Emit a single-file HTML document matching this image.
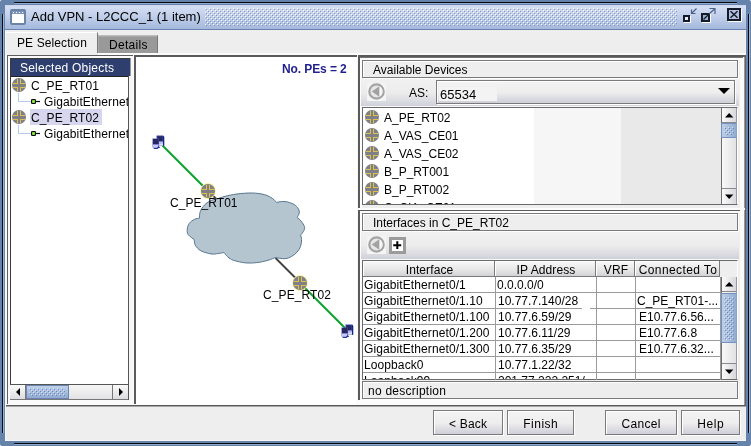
<!DOCTYPE html>
<html><head><meta charset="utf-8"><title>Add VPN - L2CCC_1</title>
<style>
html,body{margin:0;padding:0;}
body{width:751px;height:446px;overflow:hidden;position:relative;background:#fff;font-family:"Liberation Sans",Arial,sans-serif;font-size:12px;color:#000;}
.a{position:absolute;}
.t{position:absolute;white-space:nowrap;line-height:16px;height:16px;will-change:transform;}
.tool{position:absolute;background:linear-gradient(#f1f1f1 0%,#ececec 50%,#dddde3 78%,#d0d0da 100%);}
.box{position:absolute;border:1px solid #7a7a7a;box-shadow:1px 1px 0 #fff, inset 1px 1px 0 #fff;background:#eeeeee;box-sizing:border-box;}
.btn{will-change:transform;position:absolute;box-sizing:border-box;border:1px solid #7a7a7a;box-shadow:inset 1px 1px 0 #fff,1px 1px 0 #fff;background:linear-gradient(#f3f3f3 0%,#eeeeee 52%,#dcdce2 78%,#cfcfd9 100%);text-align:center;line-height:27px;height:25px;top:410px;font-size:12px;}
.sb{position:absolute;box-sizing:border-box;border:1px solid #7a7a7a;background:linear-gradient(90deg,#f6f6f6,#e4e4e6);}
.thumb{position:absolute;box-sizing:border-box;border:1px solid #6c86b4;}
.hd{will-change:transform;position:absolute;top:261px;height:16px;box-sizing:border-box;border-right:1px solid #7a7a7a;border-bottom:1px solid #7a7a7a;background:linear-gradient(#f8f8f8,#e6e6e6 60%,#d2d2d6);text-align:center;text-indent:2px;line-height:19px;box-shadow:inset 1px 1px 0 #fff;}
.vl{position:absolute;top:277px;width:1px;height:103px;background:#9a9a9a;}
.hl{position:absolute;left:363px;width:358px;height:1px;background:#9a9a9a;}
</style></head><body>

<div class="a" style="left:0;top:0;width:751px;height:446px;background:#6683ab;border-radius:2px;"></div>
<div class="a" style="left:2px;top:14px;width:1px;height:419px;background:#060810;"></div>
<div class="a" style="left:3px;top:14px;width:1px;height:419px;background:#9cb3d4;"></div>
<div class="a" style="left:14px;top:2px;width:723px;height:1px;background:#060810;"></div>
<div class="a" style="left:14px;top:3px;width:723px;height:1px;background:#93abcf;"></div>
<div class="a" style="left:748px;top:14px;width:1px;height:419px;background:#060810;"></div>
<div class="a" style="left:749px;top:14px;width:1px;height:419px;background:#9cb3d4;"></div>
<div class="a" style="left:14px;top:443px;width:723px;height:1px;background:#060810;"></div>
<div class="a" style="left:14px;top:444px;width:723px;height:1px;background:#8ea9cd;"></div>
<div class="a" style="left:5px;top:5px;width:741px;height:436px;background:#eeeeee;"></div>
<div class="a" style="left:5px;top:440px;width:741px;height:1px;background:#f7f7f7;"></div>
<div class="a" style="left:5px;top:5px;width:741px;height:24px;background:linear-gradient(#c9d5ee 0%,#d6def3 8%,#d0daf1 16%,#bfcee9 50%,#a5b9dd 100%);"></div>
<div class="a" style="left:5px;top:29px;width:741px;height:1px;background:#6a82b2;"></div>
<svg class="a" style="left:205px;top:8px" width="472" height="18"><defs><pattern id="bp" width="4" height="4" patternUnits="userSpaceOnUse"><rect x="0" y="0" width="1" height="1" fill="#fff"/><rect x="1" y="1" width="1" height="1" fill="#8195c0"/><rect x="2" y="2" width="1" height="1" fill="#fff"/><rect x="3" y="3" width="1" height="1" fill="#8195c0"/></pattern></defs><rect width="472" height="18" fill="url(#bp)"/></svg>
<svg class="a" style="left:10px;top:9px" width="17" height="17"><rect x="1" y="1" width="14" height="14" rx="1" fill="#fff" stroke="#6a84a8" stroke-width="2"/><rect x="2" y="2" width="12" height="3" fill="#7d94b8"/><g fill="#fff"><rect x="3" y="3" width="1" height="1"/><rect x="6" y="3" width="1" height="1"/><rect x="9" y="3" width="1" height="1"/><rect x="12" y="3" width="1" height="1"/></g></svg>
<div class="t" style="left:31px;top:9px;font-size:13px;">Add VPN - L2CCC_1 (1 item)</div>
<svg class="a" style="left:680px;top:6px" width="64" height="20" shape-rendering="crispEdges">
<g fill="none" stroke="#fff" stroke-width="2"><rect x="5" y="11" width="5" height="5"/></g>
<rect x="4" y="10" width="5" height="5" fill="#e8eef8" stroke="#141a28" stroke-width="2"/>
<g shape-rendering="auto" stroke="#141a28" stroke-width="1.3" fill="none"><path d="M16.5 2.5L11.5 7.5M11.5 3.5V7.5H15.5" stroke="#4d6288" stroke-width="1.2"/></g>
<g fill="none" stroke="#fff" stroke-width="2"><rect x="23" y="9" width="7" height="7"/></g>
<rect x="22" y="8" width="7" height="7" fill="#9fb0d0" stroke="#141a28" stroke-width="2"/>
<g shape-rendering="auto" stroke="#141a28" stroke-width="1.3" fill="none"><path d="M23.5 13.5L29 8" stroke="#141a28"/><path d="M29 8L34.5 3M29.5 2.5H35V8" stroke="#4d6288" stroke-width="1.2"/></g>
<g fill="none" stroke="#fff" stroke-width="1"><rect x="48.5" y="3.5" width="13" height="12"/></g>
<rect x="48" y="3" width="12" height="11" fill="#b3c1de" stroke="#141a28" stroke-width="2"/>
<g shape-rendering="auto" stroke="#141a28" stroke-width="1.5" fill="none"><path d="M50.5 5.3L57.5 11.7M57.5 5.3L50.5 11.7"/></g>
</svg>
<div class="a" style="left:5px;top:32px;width:93px;height:21px;background:#eeeeee;border-left:1px solid #fff;border-top:1px solid #fff;border-right:1px solid #787878;box-sizing:border-box;"></div>
<div class="a" style="left:98px;top:35px;width:60px;height:18px;background:#999999;border-left:1px solid #aaaaaa;border-top:1px solid #bcbcbc;border-right:1px solid #787878;box-sizing:border-box;box-shadow:inset 0 1px 0 #a8a8a8;"></div>
<div class="t" style="left:17px;top:35px;letter-spacing:0.1px;">PE Selection</div>
<div class="t" style="left:109px;top:37px;letter-spacing:0.3px;">Details</div>
<div class="a" style="left:98px;top:53px;width:648px;height:2px;background:#fbfbfb;"></div>
<div class="a" style="left:5px;top:30px;width:1px;height:411px;background:#fafafa;"></div>
<div class="a" style="left:6px;top:55px;width:1px;height:350px;background:#fafafa;"></div>
<div class="a" style="left:7px;top:400px;width:738px;height:5px;background:#fbfbfb;"></div>
<div class="a" style="left:740px;top:55px;width:4px;height:350px;background:#fbfbfb;"></div>
<div class="a" style="left:744px;top:55px;width:1px;height:351px;background:#9a9a9a;"></div>
<div class="a" style="left:745px;top:55px;width:1px;height:351px;background:#626262;"></div>
<div class="a" style="left:6px;top:405px;width:740px;height:1px;background:#5a5a5a;"></div><div class="a" style="left:6px;top:406px;width:740px;height:1px;background:#a6a6a6;"></div>
<div class="a" style="left:7px;top:55px;width:126px;height:349px;border-left:1px solid #5e5e5e;border-top:1px solid #5e5e5e;box-sizing:border-box;background:#fafafa;"></div>
<div class="a" style="left:133px;top:55px;width:1px;height:350px;background:#fbfbfb;"></div>
<div class="a" style="left:10px;top:58px;width:120px;height:342px;background:#3a3a3a;"></div>
<div class="a" style="left:130px;top:58px;width:1px;height:20px;background:#9a9a9a;"></div>
<div class="a" style="left:11px;top:59px;width:119px;height:17px;background:#2e3f6f;"></div>
<div class="a" style="left:129px;top:76px;width:4px;height:324px;background:#f5f5f5;"></div>
<div class="a" style="left:11px;top:76px;width:118px;height:1px;background:#222;"></div>
<div class="a" style="left:11px;top:77px;width:117px;height:307px;background:#fff;"></div>
<div class="a" style="left:128px;top:76px;width:1px;height:324px;background:#555;"></div>
<div class="t" style="left:20px;top:60px;color:#fff;letter-spacing:0.22px;">Selected Objects</div>
<div class="a" style="left:30px;top:109px;width:72px;height:16px;background:#d6d6ee;"></div>
<svg class="a" style="left:11px;top:77px" width="16" height="16" viewBox="-1 -1 16 16"><circle cx="7" cy="7" r="7" fill="#7f7f86"/><g fill="#dfc052" shape-rendering="crispEdges"><rect x="5" y="1" width="1" height="5"/><rect x="1" y="5" width="5" height="1"/><rect x="8" y="1" width="1" height="5"/><rect x="8" y="5" width="5" height="1"/><rect x="1" y="9" width="5" height="1"/><rect x="5" y="9" width="1" height="4"/><rect x="8" y="9" width="5" height="1"/><rect x="8" y="9" width="1" height="4"/></g></svg>
<svg class="a" style="left:11px;top:109px" width="16" height="16" viewBox="-1 -1 16 16"><circle cx="7" cy="7" r="7" fill="#7f7f86"/><g fill="#dfc052" shape-rendering="crispEdges"><rect x="5" y="1" width="1" height="5"/><rect x="1" y="5" width="5" height="1"/><rect x="8" y="1" width="1" height="5"/><rect x="8" y="5" width="5" height="1"/><rect x="1" y="9" width="5" height="1"/><rect x="5" y="9" width="1" height="4"/><rect x="8" y="9" width="5" height="1"/><rect x="8" y="9" width="1" height="4"/></g></svg>
<svg class="a" style="left:14px;top:93px" width="30" height="16"><path d="M4.5 0V8.5H17" fill="none" stroke="#b4caee" stroke-width="1"/><rect x="17" y="6" width="5" height="5" rx="1.3" fill="#0a0a0a"/><rect x="18.1" y="7.1" width="2.8" height="2.8" fill="#84f044"/><path d="M22 8.5H26" stroke="#0a0a0a" stroke-width="1.2"/></svg>
<svg class="a" style="left:14px;top:125px" width="30" height="16"><path d="M4.5 0V8.5H17" fill="none" stroke="#b4caee" stroke-width="1"/><rect x="17" y="6" width="5" height="5" rx="1.3" fill="#0a0a0a"/><rect x="18.1" y="7.1" width="2.8" height="2.8" fill="#84f044"/><path d="M22 8.5H26" stroke="#0a0a0a" stroke-width="1.2"/></svg>
<div class="t" style="left:31px;top:78px;letter-spacing:0.1px;">C_PE_RT01</div>
<div class="t" style="left:44px;top:94px;width:84px;overflow:hidden;letter-spacing:0.12px;">GigabitEthernet0/1.10</div>
<div class="t" style="left:31px;top:110px;letter-spacing:0.1px;">C_PE_RT02</div>
<div class="t" style="left:44px;top:126px;width:84px;overflow:hidden;letter-spacing:0.12px;">GigabitEthernet0/1.10</div>
<div class="a" style="left:10px;top:384px;width:118px;height:16px;background:linear-gradient(#f6f6f6,#e2e2e4);border-top:1px solid #555;border-bottom:1px solid #777;box-sizing:border-box;"></div>
<div class="a" style="left:10px;top:385px;width:16px;height:14px;background:linear-gradient(#fafafa,#dcdce0);border-right:1px solid #777;box-sizing:border-box;"></div>
<div class="a" style="left:112px;top:385px;width:16px;height:14px;background:linear-gradient(#fafafa,#dcdce0);border-left:1px solid #777;box-sizing:border-box;"></div>
<svg class="a" style="left:10px;top:385px" width="118" height="14"><path d="M10 3V11L6 7Z M109 3V11L113 7Z" fill="#000"/></svg>
<div class="a" style="left:26px;top:385px;width:43px;height:14px;background:linear-gradient(#c0d1ea,#a4badb 60%,#93abd1);border:1px solid #6c86b4;box-sizing:border-box;"></div>
<svg class="a" style="left:29px;top:388px" width="36" height="8"><rect width="36" height="8" fill="url(#bp2)"/><defs><pattern id="bp2" width="4" height="4" patternUnits="userSpaceOnUse"><rect x="0" y="0" width="1" height="1" fill="#d6e2f4"/><rect x="1" y="1" width="1" height="1" fill="#6c88b8"/><rect x="2" y="2" width="1" height="1" fill="#d6e2f4"/><rect x="3" y="3" width="1" height="1" fill="#6c88b8"/></pattern></defs></svg>
<div class="a" style="left:134px;top:55px;width:223px;height:349px;background:#fff;border-left:2px solid #5a5a5a;border-top:2px solid #5a5a5a;box-sizing:border-box;"></div>
<div class="a" style="left:357px;top:55px;width:1px;height:349px;background:#f8f8f8;"></div>
<div class="t" style="left:282px;top:61px;color:#1f1f8f;font-weight:bold;letter-spacing:-0.1px;">No. PEs = 2</div>
<svg class="a" style="left:137px;top:57px" width="221" height="346" viewBox="137 57 221 346">
<path d="M161 144L206 189" stroke="#12a033" stroke-width="2.1"/>
<path d="M209 192L218 200.5" stroke="#404040" stroke-width="1.8"/>
<path d="M275.5 258L298 280.5" stroke="#404040" stroke-width="1.8"/>
<path d="M300 283L346 329" stroke="#12a033" stroke-width="2.1"/>
<path d="M199.3 218.3C199.5 217.2 199.4 213.7 200.3 211.5C201.2 209.3 202.9 206.8 204.5 205.0C206.1 203.2 208.0 202.0 210.0 201.0C212.0 200.0 215.6 199.3 216.7 199.0C218.1 198.6 221.6 197.1 225.0 196.3C228.4 195.5 232.4 194.6 237.0 194.0C241.6 193.4 247.7 192.9 252.3 193.0C256.9 193.1 261.3 193.8 264.7 194.7C268.1 195.6 270.5 197.2 272.5 198.5C274.5 199.8 275.8 201.8 276.5 202.4C277.9 202.2 282.0 201.2 284.9 201.5C287.8 201.8 291.6 203.1 293.8 204.3C296.0 205.5 297.4 207.3 298.3 208.8C299.2 210.3 299.4 211.8 299.2 213.2C299.0 214.6 297.5 216.7 297.2 217.4C297.9 218.0 299.9 219.6 301.1 221.1C302.3 222.6 304.0 225.1 304.5 226.7C305.0 228.3 304.5 229.2 303.9 230.6C303.2 232.0 301.2 234.4 300.6 235.2C300.8 235.9 301.6 237.8 301.6 239.6C301.6 241.4 301.3 244.2 300.6 246.3C299.9 248.4 298.7 250.2 297.2 251.9C295.7 253.6 293.7 255.3 291.6 256.4C289.6 257.5 287.6 258.5 284.9 258.7C282.2 258.9 276.9 257.7 275.3 257.5C274.1 258.0 271.1 259.4 268.0 260.3C264.9 261.2 260.5 262.2 256.8 262.6C253.1 263.0 249.5 263.3 245.6 262.9C241.7 262.5 236.4 261.3 233.5 260.3C230.6 259.3 229.5 258.3 227.9 257.0C226.3 255.7 224.6 253.2 223.9 252.5C222.9 252.7 220.0 253.4 217.8 253.6C215.7 253.8 213.8 254.4 211.0 253.9C208.2 253.4 203.5 252.2 200.9 250.8C198.3 249.4 196.4 247.1 195.3 245.2C194.2 243.3 194.4 240.5 194.2 239.6C193.2 238.8 189.3 236.3 188.2 234.5C187.0 232.7 187.1 230.8 187.3 229.0C187.5 227.2 188.0 225.1 189.2 223.5C190.4 221.9 192.8 220.2 194.5 219.3C196.2 218.4 198.5 218.5 199.3 218.3Z" fill="#b5c5cf" stroke="#567590" stroke-width="1"/>
</svg>
<svg class="a" style="left:200px;top:183px" width="16" height="16" viewBox="-1 -1 16 16"><circle cx="7" cy="7" r="7.7" fill="#f6ee7c"/><circle cx="7" cy="7" r="7" fill="#7f7f86"/><g fill="#dfc052" shape-rendering="crispEdges"><rect x="5" y="1" width="1" height="5"/><rect x="1" y="5" width="5" height="1"/><rect x="8" y="1" width="1" height="5"/><rect x="8" y="5" width="5" height="1"/><rect x="1" y="9" width="5" height="1"/><rect x="5" y="9" width="1" height="4"/><rect x="8" y="9" width="5" height="1"/><rect x="8" y="9" width="1" height="4"/></g></svg>
<svg class="a" style="left:292px;top:275px" width="16" height="16" viewBox="-1 -1 16 16"><circle cx="7" cy="7" r="7.7" fill="#f6ee7c"/><circle cx="7" cy="7" r="7" fill="#7f7f86"/><g fill="#dfc052" shape-rendering="crispEdges"><rect x="5" y="1" width="1" height="5"/><rect x="1" y="5" width="5" height="1"/><rect x="8" y="1" width="1" height="5"/><rect x="8" y="5" width="5" height="1"/><rect x="1" y="9" width="5" height="1"/><rect x="5" y="9" width="1" height="4"/><rect x="8" y="9" width="5" height="1"/><rect x="8" y="9" width="1" height="4"/></g></svg>
<div class="t" style="left:170px;top:195px;letter-spacing:0.05px;">C_PE_RT01</div>
<div class="t" style="left:262.5px;top:287px;letter-spacing:0.1px;">C_PE_RT02</div>
<svg class="a" style="left:152px;top:135px" width="13" height="15" viewBox="0 0 13 15"><path d="M4.5 0.5H11L12 1.5V10L11 11H5Z" fill="#3a46b8"/><path d="M11 0.5L12.3 2V10.5L11 11Z" fill="#0c2a78"/><rect x="5.2" y="1.3" width="5.3" height="5" fill="#28285c"/><path d="M5 6.5H11V10.5H6.5Z" fill="#b8bcf0"/><path d="M0.5 3.5H6.5L7 4V12L6 14H2L0.5 12Z" fill="#4a52c4"/><rect x="1" y="4" width="5.5" height="5.3" fill="#28285c"/><path d="M1 9.5H6.5V11L5 12.8H1.5L0.3 11.5Z" fill="#c4c8f4"/><path d="M2 13H7.5L8 12L6.5 11.2L5 13.8H2.5Z" fill="#102a80"/><path d="M7 9.5L10.5 8.5L11 10.5H7Z" fill="#e6e8fb"/></svg>
<svg class="a" style="left:341px;top:324px" width="13" height="15" viewBox="0 0 13 15"><path d="M4.5 0.5H11L12 1.5V10L11 11H5Z" fill="#3a46b8"/><path d="M11 0.5L12.3 2V10.5L11 11Z" fill="#0c2a78"/><rect x="5.2" y="1.3" width="5.3" height="5" fill="#28285c"/><path d="M5 6.5H11V10.5H6.5Z" fill="#b8bcf0"/><path d="M0.5 3.5H6.5L7 4V12L6 14H2L0.5 12Z" fill="#4a52c4"/><rect x="1" y="4" width="5.5" height="5.3" fill="#28285c"/><path d="M1 9.5H6.5V11L5 12.8H1.5L0.3 11.5Z" fill="#c4c8f4"/><path d="M2 13H7.5L8 12L6.5 11.2L5 13.8H2.5Z" fill="#102a80"/><path d="M7 9.5L10.5 8.5L11 10.5H7Z" fill="#e6e8fb"/></svg>
<div class="a" style="left:358px;top:55px;width:382px;height:153px;border-left:2px solid #5a5a5a;border-top:2px solid #5a5a5a;box-sizing:border-box;background:#eeeeee;"></div>
<div class="a" style="left:740px;top:55px;width:5px;height:2px;background:#5a5a5a;"></div>
<div class="a" style="left:360px;top:57px;width:383px;height:1px;background:#747474;"></div>
<div class="a" style="left:360px;top:58px;width:2px;height:150px;background:#fcfcfc;"></div>
<div class="a" style="left:360px;top:58px;width:380px;height:2px;background:#fcfcfc;"></div>
<div class="a" style="left:358px;top:208px;width:387px;height:2px;background:#fcfcfc;"></div>
<div class="a" style="left:358px;top:210px;width:382px;height:190px;border-left:2px solid #5a5a5a;border-top:1px solid #5a5a5a;box-sizing:border-box;background:#eeeeee;"></div>
<div class="a" style="left:360px;top:211px;width:2px;height:189px;background:#fcfcfc;"></div>
<div class="a" style="left:360px;top:211px;width:380px;height:2px;background:#fcfcfc;"></div>
<div class="box" style="left:362px;top:60px;width:376px;height:18px;"></div>
<div class="t" style="left:373px;top:62px;">Available Devices</div>
<div class="tool" style="left:361px;top:79px;width:378px;height:27px;"></div>
<div class="a" style="left:367px;top:83px;width:19px;height:18px;background:#f4f4f4;"></div><svg class="a" style="left:368px;top:83px" width="18" height="18" viewBox="0 0 18 18"><circle cx="8.5" cy="8.5" r="7.2" fill="#e6e6e6" stroke="#a4a4a4" stroke-width="2.2"/><path d="M11.2 3V14A6.2 6.2 0 0 0 11.2 3Z" fill="#f6f6f6"/><path d="M11.3 3.2V13.8L3.8 8.5Z" fill="#a2a2a2"/></svg>
<div class="t" style="left:409px;top:85px;">AS:</div>
<div class="a" style="left:436px;top:80px;width:299px;height:24px;box-sizing:border-box;border:1px solid #7a7a7a;box-shadow:inset 1px 1px 0 #fff,1px 1px 0 #fff;background:linear-gradient(#f3f3f3 0%,#eeeeee 52%,#dcdce2 78%,#cfcfd9 100%);"></div>
<div class="a" style="left:439px;top:87px;width:58px;height:14px;background:#f3f3f3;"></div><div class="t" style="left:440px;top:87px;font-size:13px;">65534</div>
<svg class="a" style="left:717px;top:87px" width="14" height="8"><path d="M1 1H13L7 7Z" fill="#000"/></svg>
<div class="a" style="left:362px;top:107px;width:376px;height:98px;box-sizing:border-box;border:1px solid #6a6a6a;border-right-color:#fff;background:linear-gradient(90deg,#fff 0,#fff 171px,#f6f6f6 171px,#f6f6f6 258px,#e9e9e9 258px);overflow:hidden;"></div>
<div class="a" style="left:363px;top:108px;width:358px;height:96px;overflow:hidden;">
<svg class="a" style="left:1px;top:1px" width="16" height="16" viewBox="-1 -1 16 16"><circle cx="7" cy="7" r="7" fill="#7f7f86"/><g fill="#dfc052" shape-rendering="crispEdges"><rect x="5" y="1" width="1" height="5"/><rect x="1" y="5" width="5" height="1"/><rect x="8" y="1" width="1" height="5"/><rect x="8" y="5" width="5" height="1"/><rect x="1" y="9" width="5" height="1"/><rect x="5" y="9" width="1" height="4"/><rect x="8" y="9" width="5" height="1"/><rect x="8" y="9" width="1" height="4"/></g></svg>
<div class="t" style="left:21px;top:2px;">A_PE_RT02</div>
<svg class="a" style="left:1px;top:19px" width="16" height="16" viewBox="-1 -1 16 16"><circle cx="7" cy="7" r="7" fill="#7f7f86"/><g fill="#dfc052" shape-rendering="crispEdges"><rect x="5" y="1" width="1" height="5"/><rect x="1" y="5" width="5" height="1"/><rect x="8" y="1" width="1" height="5"/><rect x="8" y="5" width="5" height="1"/><rect x="1" y="9" width="5" height="1"/><rect x="5" y="9" width="1" height="4"/><rect x="8" y="9" width="5" height="1"/><rect x="8" y="9" width="1" height="4"/></g></svg>
<div class="t" style="left:21px;top:20px;">A_VAS_CE01</div>
<svg class="a" style="left:1px;top:37px" width="16" height="16" viewBox="-1 -1 16 16"><circle cx="7" cy="7" r="7" fill="#7f7f86"/><g fill="#dfc052" shape-rendering="crispEdges"><rect x="5" y="1" width="1" height="5"/><rect x="1" y="5" width="5" height="1"/><rect x="8" y="1" width="1" height="5"/><rect x="8" y="5" width="5" height="1"/><rect x="1" y="9" width="5" height="1"/><rect x="5" y="9" width="1" height="4"/><rect x="8" y="9" width="5" height="1"/><rect x="8" y="9" width="1" height="4"/></g></svg>
<div class="t" style="left:21px;top:38px;">A_VAS_CE02</div>
<svg class="a" style="left:1px;top:55px" width="16" height="16" viewBox="-1 -1 16 16"><circle cx="7" cy="7" r="7" fill="#7f7f86"/><g fill="#dfc052" shape-rendering="crispEdges"><rect x="5" y="1" width="1" height="5"/><rect x="1" y="5" width="5" height="1"/><rect x="8" y="1" width="1" height="5"/><rect x="8" y="5" width="5" height="1"/><rect x="1" y="9" width="5" height="1"/><rect x="5" y="9" width="1" height="4"/><rect x="8" y="9" width="5" height="1"/><rect x="8" y="9" width="1" height="4"/></g></svg>
<div class="t" style="left:21px;top:56px;">B_P_RT001</div>
<svg class="a" style="left:1px;top:73px" width="16" height="16" viewBox="-1 -1 16 16"><circle cx="7" cy="7" r="7" fill="#7f7f86"/><g fill="#dfc052" shape-rendering="crispEdges"><rect x="5" y="1" width="1" height="5"/><rect x="1" y="5" width="5" height="1"/><rect x="8" y="1" width="1" height="5"/><rect x="8" y="5" width="5" height="1"/><rect x="1" y="9" width="5" height="1"/><rect x="5" y="9" width="1" height="4"/><rect x="8" y="9" width="5" height="1"/><rect x="8" y="9" width="1" height="4"/></g></svg>
<div class="t" style="left:21px;top:74px;">B_P_RT002</div>
<svg class="a" style="left:1px;top:91px" width="16" height="16" viewBox="-1 -1 16 16"><circle cx="7" cy="7" r="7" fill="#7f7f86"/><g fill="#dfc052" shape-rendering="crispEdges"><rect x="5" y="1" width="1" height="5"/><rect x="1" y="5" width="5" height="1"/><rect x="8" y="1" width="1" height="5"/><rect x="8" y="5" width="5" height="1"/><rect x="1" y="9" width="5" height="1"/><rect x="5" y="9" width="1" height="4"/><rect x="8" y="9" width="5" height="1"/><rect x="8" y="9" width="1" height="4"/></g></svg>
<div class="t" style="left:21px;top:92px;">C_CIA_CE01</div>
</div>
<div class="a" style="left:721px;top:108px;width:16px;height:96px;background:linear-gradient(90deg,#f8f8f8,#e2e2e4);border-left:1px solid #6e6e6e;border-right:1px solid #9a9a9a;box-sizing:border-box;"></div>
<div class="a" style="left:722px;top:108px;width:14px;height:15px;background:linear-gradient(90deg,#fbfbfb,#d8d8dc);border-bottom:1px solid #8a8a8a;box-sizing:border-box;"></div>
<div class="a" style="left:722px;top:188px;width:14px;height:16px;background:linear-gradient(90deg,#fbfbfb,#d8d8dc);border-top:1px solid #8a8a8a;box-sizing:border-box;"></div>
<svg class="a" style="left:721px;top:108px" width="16" height="96"><path d="M4 9.5H12.4L8.2 5Z M4 86.5H12.4L8.2 91.0Z" fill="#000"/></svg>
<div class="a" style="left:721px;top:123px;width:16px;height:15px;background:linear-gradient(90deg,#bccde8,#a6bcdc 55%,#93abd0);border:1px solid #7390c0;border-right-color:#8aa2cc;box-sizing:border-box;"></div>
<svg class="a" style="left:724px;top:127px" width="10" height="8"><rect width="10" height="8" fill="url(#bp2)"/></svg>
<div class="a" style="left:362px;top:106px;width:376px;height:1px;background:#f8f8f8;"></div><div class="a" style="left:362px;top:259px;width:376px;height:1px;background:#f8f8f8;"></div>
<div class="box" style="left:362px;top:213px;width:376px;height:18px;"></div>
<div class="t" style="left:373px;top:215px;">Interfaces in C_PE_RT02</div>
<div class="tool" style="left:361px;top:232px;width:378px;height:27px;"></div>
<div class="a" style="left:367px;top:236px;width:19px;height:18px;background:#f4f4f4;"></div><svg class="a" style="left:368px;top:236px" width="18" height="18" viewBox="0 0 18 18"><circle cx="8.5" cy="8.5" r="7.2" fill="#e6e6e6" stroke="#a4a4a4" stroke-width="2.2"/><path d="M11.2 3V14A6.2 6.2 0 0 0 11.2 3Z" fill="#f6f6f6"/><path d="M11.3 3.2V13.8L3.8 8.5Z" fill="#a2a2a2"/></svg>
<div class="a" style="left:389px;top:237px;width:17px;height:17px;box-sizing:border-box;border:3px solid #9b9b9b;background:#fff;"></div>
<svg class="a" style="left:389px;top:237px" width="17" height="17"><path d="M8.3 4.3V12.1M4.2 8.3H12.2" stroke="#000" stroke-width="2"/></svg>
<div class="a" style="left:362px;top:260px;width:376px;height:120px;box-sizing:border-box;border:1px solid #6a6a6a;border-right-color:#fff;background:#fff;"></div>
<div class="a" style="left:363px;top:261px;width:374px;height:16px;background:#eeeeee;"></div>
<div class="hd" style="left:363px;width:132px;letter-spacing:0.10px;">Interface</div>
<div class="hd" style="left:495px;width:101px;letter-spacing:0.10px;">IP Address</div>
<div class="hd" style="left:596px;width:39px;letter-spacing:0.10px;">VRF</div>
<div class="hd" style="left:635px;width:85px;letter-spacing:0.40px;">Connected To</div>
<div class="a" style="left:363px;top:277px;width:358px;height:102px;overflow:hidden;">
<div class="t" style="left:1px;top:0px;letter-spacing:0.1px;">GigabitEthernet0/1</div>
<div class="t" style="left:134px;top:0px;">0.0.0.0/0</div>
<div class="t" style="left:1px;top:16px;letter-spacing:0.1px;">GigabitEthernet0/1.10</div>
<div class="t" style="left:135px;top:16px;">10.77.7.140/28</div>
<div class="t" style="left:274px;top:16px;">C_PE_RT01-...</div>
<div class="t" style="left:1px;top:32px;letter-spacing:0.1px;">GigabitEthernet0/1.100</div>
<div class="t" style="left:135px;top:32px;">10.77.6.59/29</div>
<div class="t" style="left:276px;top:32px;">E10.77.6.56...</div>
<div class="t" style="left:1px;top:48px;letter-spacing:0.1px;">GigabitEthernet0/1.200</div>
<div class="t" style="left:135px;top:48px;">10.77.6.11/29</div>
<div class="t" style="left:276px;top:48px;">E10.77.6.8</div>
<div class="t" style="left:1px;top:64px;letter-spacing:0.1px;">GigabitEthernet0/1.300</div>
<div class="t" style="left:135px;top:64px;">10.77.6.35/29</div>
<div class="t" style="left:276px;top:64px;">E10.77.6.32...</div>
<div class="t" style="left:1px;top:80px;letter-spacing:0.1px;">Loopback0</div>
<div class="t" style="left:135px;top:80px;">10.77.1.22/32</div>
<div class="t" style="left:1px;top:96px;letter-spacing:0.1px;">Loopback99</div>
<div class="t" style="left:135px;top:96px;">201.77.222.251/</div>
</div>
<div class="hl" style="top:292px;"></div>
<div class="hl" style="top:308px;"></div>
<div class="hl" style="top:324px;"></div>
<div class="hl" style="top:340px;"></div>
<div class="hl" style="top:356px;"></div>
<div class="hl" style="top:372px;"></div>
<div class="vl" style="left:495px;"></div>
<div class="vl" style="left:596px;"></div>
<div class="vl" style="left:635px;"></div>
<div class="vl" style="left:720px;"></div>
<div class="a" style="left:582px;top:308px;width:8px;height:1px;background:#fff;"></div>
<div class="a" style="left:721px;top:277px;width:16px;height:102px;background:linear-gradient(90deg,#f8f8f8,#e2e2e4);border-left:1px solid #6e6e6e;border-right:1px solid #9a9a9a;box-sizing:border-box;"></div>
<div class="a" style="left:722px;top:277px;width:14px;height:15px;background:linear-gradient(90deg,#fbfbfb,#d8d8dc);border-bottom:1px solid #8a8a8a;box-sizing:border-box;"></div>
<div class="a" style="left:722px;top:363px;width:14px;height:16px;background:linear-gradient(90deg,#fbfbfb,#d8d8dc);border-top:1px solid #8a8a8a;box-sizing:border-box;"></div>
<svg class="a" style="left:721px;top:277px" width="16" height="102"><path d="M4 9.5H12.4L8.2 5Z M4 92.5H12.4L8.2 97.0Z" fill="#000"/></svg>
<div class="a" style="left:721px;top:293px;width:16px;height:50px;background:linear-gradient(90deg,#bccde8,#a6bcdc 55%,#93abd0);border:1px solid #7390c0;border-right-color:#8aa2cc;box-sizing:border-box;"></div>
<svg class="a" style="left:724px;top:297px" width="10" height="43"><rect width="10" height="43" fill="url(#bp2)"/></svg>
<div class="box" style="left:362px;top:381px;width:376px;height:18px;"></div>
<div class="t" style="left:368px;top:383px;letter-spacing:0.25px;">no description</div>
<div class="btn" style="left:433px;width:70px;letter-spacing:0.2px;text-indent:0.2px;">&lt; Back</div>
<div class="btn" style="left:507px;width:67px;letter-spacing:0.5px;text-indent:0.5px;">Finish</div>
<div class="btn" style="left:605px;width:72px;letter-spacing:0.3px;text-indent:0.3px;">Cancel</div>
<div class="btn" style="left:681px;width:59px;letter-spacing:0.6px;text-indent:0.6px;">Help</div>
</body></html>
